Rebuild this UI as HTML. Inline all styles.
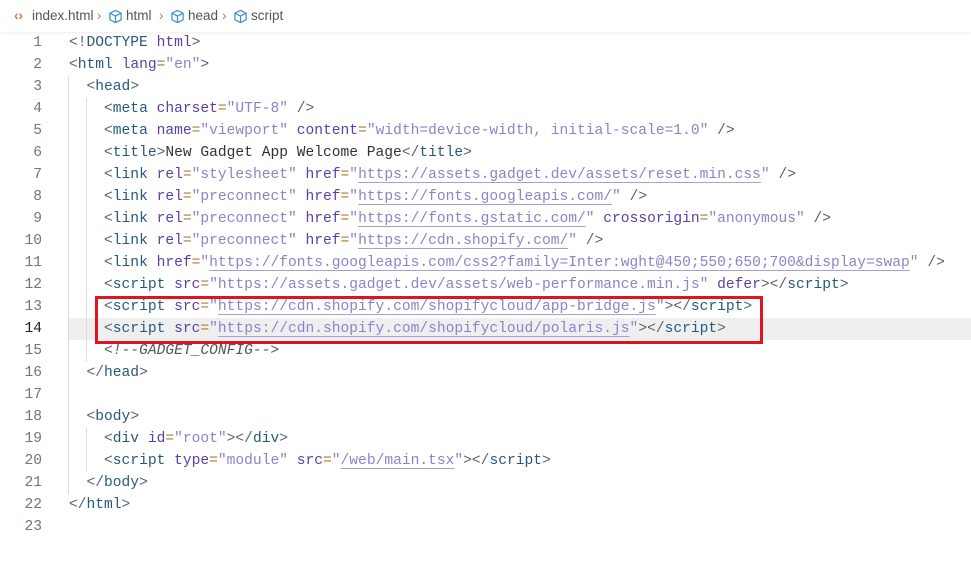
<!DOCTYPE html>
<html><head><style>
body{margin:0;width:971px;height:562px;background:#fff;overflow:hidden;position:relative;font-family:"Liberation Mono",monospace;}
.bc{position:absolute;left:0;top:0;width:971px;height:32px;background:#fff;box-shadow:0 1px 3px rgba(0,0,0,0.08);font-family:"Liberation Sans",sans-serif;font-size:13.5px;color:#555;}
.bc span{position:absolute;top:8px;}
.l{position:absolute;left:0;height:22px;line-height:22px;font-size:14.6px;white-space:pre;width:971px;}
.n{position:absolute;right:929px;color:#6e7681;}
.c{position:absolute;left:69px;color:#333;}
.b{color:#56646f}.t{color:#275a7a}.a{color:#5a3fa8}.e{color:#b07a30}.s{color:#8e82c8}
.u{text-decoration:underline;text-decoration-color:#a89edb;text-underline-offset:4px}
.cm{color:#555;font-style:italic}
.g{position:absolute;width:1px;background:#dcdcdc}
</style></head><body>
<div class="bc">
<span style="left:14px;color:#d9773a;font-weight:bold">&lsaquo;&rsaquo;</span>
<span style="left:32px">index.html</span>
<span style="left:97px;color:#888">&rsaquo;</span>
<svg style="position:absolute;left:108px;top:9px" width="15" height="15" viewBox="0 0 16 16" fill="none" stroke="#3a8fd0" stroke-width="1.3"><path d="M8 1.5 14 4.5v7L8 14.5 2 11.5v-7Z M2 4.5 8 7.5 14 4.5 M8 7.5v7"/></svg>
<span style="left:126px">html</span>
<span style="left:159px;color:#888">&rsaquo;</span>
<svg style="position:absolute;left:170px;top:9px" width="15" height="15" viewBox="0 0 16 16" fill="none" stroke="#3a8fd0" stroke-width="1.3"><path d="M8 1.5 14 4.5v7L8 14.5 2 11.5v-7Z M2 4.5 8 7.5 14 4.5 M8 7.5v7"/></svg>
<span style="left:188px">head</span>
<span style="left:222px;color:#888">&rsaquo;</span>
<svg style="position:absolute;left:233px;top:9px" width="15" height="15" viewBox="0 0 16 16" fill="none" stroke="#3a8fd0" stroke-width="1.3"><path d="M8 1.5 14 4.5v7L8 14.5 2 11.5v-7Z M2 4.5 8 7.5 14 4.5 M8 7.5v7"/></svg>
<span style="left:251px">script</span>
</div>
<div style="position:absolute;left:69px;top:318px;width:902px;height:22px;background:#efefef"></div>
<div class="g" style="left:68px;top:76px;height:418px"></div>
<div class="g" style="left:86px;top:98px;height:264px"></div>
<div class="g" style="left:86px;top:428px;height:44px"></div>

<div class="l" style="top:32px"><span class="n">1</span><span class="c"><span class="b">&lt;!</span><span class="t">DOCTYPE</span> <span class="a">html</span><span class="b">&gt;</span></span></div>
<div class="l" style="top:54px"><span class="n">2</span><span class="c"><span class="b">&lt;</span><span class="t">html</span> <span class="a">lang</span><span class="e">=</span><span class="s">"en"</span><span class="b">&gt;</span></span></div>
<div class="l" style="top:76px"><span class="n">3</span><span class="c">  <span class="b">&lt;</span><span class="t">head</span><span class="b">&gt;</span></span></div>
<div class="l" style="top:98px"><span class="n">4</span><span class="c">    <span class="b">&lt;</span><span class="t">meta</span> <span class="a">charset</span><span class="e">=</span><span class="s">"UTF-8"</span> <span class="b">/&gt;</span></span></div>
<div class="l" style="top:120px"><span class="n">5</span><span class="c">    <span class="b">&lt;</span><span class="t">meta</span> <span class="a">name</span><span class="e">=</span><span class="s">"viewport"</span> <span class="a">content</span><span class="e">=</span><span class="s">"width=device-width, initial-scale=1.0"</span> <span class="b">/&gt;</span></span></div>
<div class="l" style="top:142px"><span class="n">6</span><span class="c">    <span class="b">&lt;</span><span class="t">title</span><span class="b">&gt;</span>New Gadget App Welcome Page<span class="b">&lt;/</span><span class="t">title</span><span class="b">&gt;</span></span></div>
<div class="l" style="top:164px"><span class="n">7</span><span class="c">    <span class="b">&lt;</span><span class="t">link</span> <span class="a">rel</span><span class="e">=</span><span class="s">"stylesheet"</span> <span class="a">href</span><span class="e">=</span><span class="s">"<span class="u">https://assets.gadget.dev/assets/reset.min.css</span>"</span> <span class="b">/&gt;</span></span></div>
<div class="l" style="top:186px"><span class="n">8</span><span class="c">    <span class="b">&lt;</span><span class="t">link</span> <span class="a">rel</span><span class="e">=</span><span class="s">"preconnect"</span> <span class="a">href</span><span class="e">=</span><span class="s">"<span class="u">https://fonts.googleapis.com/</span>"</span> <span class="b">/&gt;</span></span></div>
<div class="l" style="top:208px"><span class="n">9</span><span class="c">    <span class="b">&lt;</span><span class="t">link</span> <span class="a">rel</span><span class="e">=</span><span class="s">"preconnect"</span> <span class="a">href</span><span class="e">=</span><span class="s">"<span class="u">https://fonts.gstatic.com/</span>"</span> <span class="a">crossorigin</span><span class="e">=</span><span class="s">"anonymous"</span> <span class="b">/&gt;</span></span></div>
<div class="l" style="top:230px"><span class="n">10</span><span class="c">    <span class="b">&lt;</span><span class="t">link</span> <span class="a">rel</span><span class="e">=</span><span class="s">"preconnect"</span> <span class="a">href</span><span class="e">=</span><span class="s">"<span class="u">https://cdn.shopify.com/</span>"</span> <span class="b">/&gt;</span></span></div>
<div class="l" style="top:252px"><span class="n">11</span><span class="c">    <span class="b">&lt;</span><span class="t">link</span> <span class="a">href</span><span class="e">=</span><span class="s">"<span class="u">https://fonts.googleapis.com/css2?family=Inter:wght@450;550;650;700&amp;display=swap</span>"</span> <span class="b">/&gt;</span></span></div>
<div class="l" style="top:274px"><span class="n">12</span><span class="c">    <span class="b">&lt;</span><span class="t">script</span> <span class="a">src</span><span class="e">=</span><span class="s">"https://assets.gadget.dev/assets/web-performance.min.js"</span> <span class="a">defer</span><span class="b">&gt;&lt;/</span><span class="t">script</span><span class="b">&gt;</span></span></div>
<div class="l" style="top:296px"><span class="n">13</span><span class="c">    <span class="b">&lt;</span><span class="t">script</span> <span class="a">src</span><span class="e">=</span><span class="s">"<span class="u">https://cdn.shopify.com/shopifycloud/app-bridge.js</span>"</span><span class="b">&gt;&lt;/</span><span class="t">script</span><span class="b">&gt;</span></span></div>
<div class="l" style="top:318px"><span class="n" style="color:#222">14</span><span class="c">    <span class="b">&lt;</span><span class="t">script</span> <span class="a">src</span><span class="e">=</span><span class="s">"<span class="u">https://cdn.shopify.com/shopifycloud/polaris.js</span>"</span><span class="b">&gt;&lt;/</span><span class="t">script</span><span class="b">&gt;</span></span></div>
<div class="l" style="top:340px"><span class="n">15</span><span class="c">    <span class="cm">&lt;!--GADGET_CONFIG--&gt;</span></span></div>
<div class="l" style="top:362px"><span class="n">16</span><span class="c">  <span class="b">&lt;/</span><span class="t">head</span><span class="b">&gt;</span></span></div>
<div class="l" style="top:384px"><span class="n">17</span></div>
<div class="l" style="top:406px"><span class="n">18</span><span class="c">  <span class="b">&lt;</span><span class="t">body</span><span class="b">&gt;</span></span></div>
<div class="l" style="top:428px"><span class="n">19</span><span class="c">    <span class="b">&lt;</span><span class="t">div</span> <span class="a">id</span><span class="e">=</span><span class="s">"root"</span><span class="b">&gt;&lt;/</span><span class="t">div</span><span class="b">&gt;</span></span></div>
<div class="l" style="top:450px"><span class="n">20</span><span class="c">    <span class="b">&lt;</span><span class="t">script</span> <span class="a">type</span><span class="e">=</span><span class="s">"module"</span> <span class="a">src</span><span class="e">=</span><span class="s">"<span class="u">/web/main.tsx</span>"</span><span class="b">&gt;&lt;/</span><span class="t">script</span><span class="b">&gt;</span></span></div>
<div class="l" style="top:472px"><span class="n">21</span><span class="c">  <span class="b">&lt;/</span><span class="t">body</span><span class="b">&gt;</span></span></div>
<div class="l" style="top:494px"><span class="n">22</span><span class="c"><span class="b">&lt;/</span><span class="t">html</span><span class="b">&gt;</span></span></div>
<div class="l" style="top:516px"><span class="n">23</span></div>

<div style="position:absolute;left:95px;top:296px;width:662px;height:42px;border:3px solid #e0141c"></div>
</body></html>
